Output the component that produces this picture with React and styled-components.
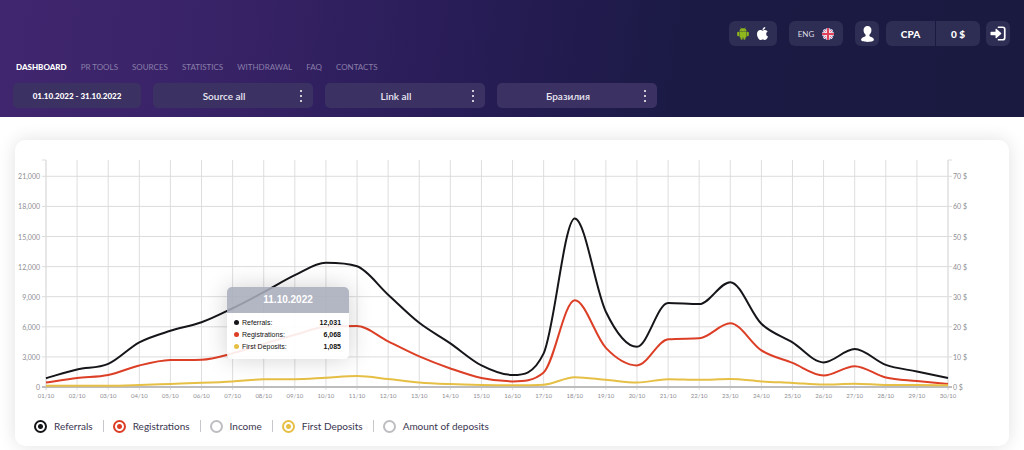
import React, { useState } from "react";
import styled, { createGlobalStyle } from "styled-components";
import { FaApple } from "react-icons/fa";

const GlobalStyle = createGlobalStyle`
  *, *::before, *::after { box-sizing: border-box; }
  body {
    margin: 0;
    background: #fff;
    font-family: "Lato", "Open Sans", sans-serif;
    color: #3a3650;
  }
  button, select, input { font-family: inherit; margin: 0; }
`;

const Header = styled.header`
  display: flex;
  flex-direction: column;
  padding: 21px 14px 9px 13px;
  background: linear-gradient(98deg, #40266e 0%, #392368 20%, #2a1d59 42%, #1b1a45 66%, #1a1a40 100%);
`;

const AccountBar = styled.div`
  display: flex;
  justify-content: flex-end;
  height: 25px;
`;

const pill = `
  display: flex;
  align-items: center;
  justify-content: center;
  border: 0;
  padding: 0;
  background: #2e2d53;
  color: #fff;
  text-decoration: none;
`;

const Apps = styled.div`
  ${pill}
  gap: 6px;
  width: 48px;
  margin-right: 12px;
  border-radius: 6px;
  a { display: flex; color: inherit; }
`;

const Language = styled.button`
  ${pill}
  gap: 8px;
  width: 54px;
  margin-right: 12px;
  border-radius: 6px;
  font-size: 8px;
  color: #dcdbe6;
`;

const IconButton = styled.button`
  ${pill}
  width: 24px;
  border-radius: 6px;
`;

const Balance = styled.div`
  display: flex;
  gap: 1px;
  margin: 0 6px 0 7px;
  border-radius: 6px;
  overflow: hidden;
`;

const BalanceCell = styled.span`
  ${pill}
  width: ${(p) => (p.$wide ? 49 : 44)}px;
  font-size: 10px;
  font-weight: 900;
`;

const Nav = styled.nav`
  display: flex;
  gap: 14px;
  margin: 15px 0 10px 3px;
`;

const NavLink = styled.a`
  font-size: 8px;
  line-height: 12px;
  text-decoration: none;
  color: ${(p) => (p.$active ? "#fff" : "#8a7ea9")};
  font-weight: ${(p) => (p.$active ? 900 : 400)};
`;

const Filters = styled.div`
  display: flex;
  gap: 12px;
`;

const DateRange = styled.button`
  ${pill}
  height: 25px;
  width: 128px;
  border-radius: 5px;
  background: #3b3162;
  font-size: 8px;
  font-weight: 900;
`;

const SelectWrap = styled.label`
  position: relative;
  display: flex;
  flex: 0 1 160px;
  svg {
    position: absolute;
    right: 10px;
    top: 6px;
    pointer-events: none;
  }
`;

const Select = styled.select`
  appearance: none;
  width: 100%;
  height: 25px;
  padding: 0 18px 0 0;
  border: 0;
  border-radius: 5px;
  background: #3b3162;
  color: #e9e7f2;
  font-size: 10px;
  font-weight: 600;
  text-align: center;
  text-align-last: center;
`;

const Card = styled.main`
  margin: 23px 15px 4px;
  padding-bottom: 12px;
  border-radius: 10px;
  background: #fff;
  box-shadow: 0 0 18px rgba(0, 0, 0, 0.12);
`;

const ChartArea = styled.div`
  position: relative;
`;

const Chart = styled.svg`
  display: block;
  width: 100%;
  height: auto;
`;

const AxisLabel = styled.text`
  font-size: ${(p) => (p.$small ? 6 : 7)}px;
  fill: #8e8e93;
`;

const Tooltip = styled.div`
  position: absolute;
  width: 122px;
  transform: translate(calc(-100% - 8px), -50%);
  border-radius: 5px;
  overflow: hidden;
  box-shadow: 0 0 24px rgba(0, 0, 0, 0.18);
  font-family: "Liberation Sans", sans-serif;
`;

const TooltipTitle = styled.div`
  background: rgba(168, 172, 187, 0.88);
  color: #fff;
  text-align: center;
  font-size: 10px;
  font-weight: 700;
  line-height: 26px;
`;

const TooltipBody = styled.div`
  padding: 4px 8px 6px 7px;
  background: rgba(255, 255, 255, 0.9);
`;

const TooltipRow = styled.div`
  display: flex;
  align-items: center;
  font-size: 7px;
  line-height: 12px;
  color: #111;
  &::before {
    content: "";
    width: 5px;
    height: 5px;
    margin-right: 3px;
    border-radius: 50%;
    background: ${(p) => p.$color};
  }
  strong { margin-left: auto; }
`;

const Legend = styled.div`
  display: flex;
  align-items: center;
  margin: 12px 0 0 19px;
`;

const LegendItem = styled.label`
  display: flex;
  align-items: center;
  gap: 7px;
  height: 16px;
  font-size: 10px;
  line-height: 16px;
  color: #3a3650;
  & + &::before {
    content: "";
    width: 1px;
    height: 12px;
    margin: 0 2px 0 10px;
    background: #c8c8cc;
  }
`;

const Toggle = styled.input`
  appearance: none;
  width: 13px;
  height: 13px;
  border: 2px solid #bdbdc2;
  border-radius: 50%;
  &:checked {
    border-color: ${(p) => p.$color};
    background: radial-gradient(circle, ${(p) => p.$color} 2px, transparent 3px);
  }
`;

const Android = () => (
  <svg width="12" height="13" viewBox="0 0 24 26" fill="#8fb81c" aria-hidden="true">
    <path d="M5 8.8a7 6.500 0 0 1 14 0z" />
    <path d="M7 1l2.400 3M17 1l-2.400 3" stroke="#8fb81c" strokeWidth="1.200" />
    <path d="M5 9.500h14V19a1.800 1.800 0 0 1-1.800 1.800H6.800A1.800 1.800 0 0 1 5 19z" />
    <rect x="0.400" y="9.400" width="3.900" height="9" rx="1.900" />
    <rect x="19.700" y="9.400" width="3.900" height="9" rx="1.900" />
    <rect x="7.200" y="17" width="4" height="8.600" rx="1.900" />
    <rect x="12.800" y="17" width="4" height="8.600" rx="1.900" />
    <circle cx="9" cy="6" r="0.700" fill="#2e2d53" />
    <circle cx="15" cy="6" r="0.700" fill="#2e2d53" />
  </svg>
);

const Flag = () => (
  <svg width="12" height="12" viewBox="0 0 24 24" aria-hidden="true">
    <clipPath id="flag"><circle cx="12" cy="12" r="12" /></clipPath>
    <g clipPath="url(#flag)">
      <rect width="24" height="24" fill="#5567a8" />
      <path d="M2 2l20 20M22 2L2 22" stroke="#f0e9f0" strokeWidth="5" />
      <path d="M2 2l20 20M22 2L2 22" stroke="#e0607a" strokeWidth="1.800" />
      <path d="M12 0v24M0 12h24" stroke="#f4e6ea" strokeWidth="7" />
      <path d="M12 0v24M0 12h24" stroke="#e0405a" strokeWidth="4" />
    </g>
  </svg>
);

const Person = () => (
  <svg width="13" height="16" viewBox="0 0 24 30" fill="#fff" aria-hidden="true">
    <path d="M12 0c4.600 0 7.400 3.200 7.400 7.600 0 3.600-1.500 7-3.800 8.900-.5 2 .2 3 2.200 3.800C21.500 21.700 24 23.400 24 26c0 2.800-5.500 4-12 4S0 28.800 0 26c0-2.600 2.500-4.300 6.200-5.700 2-.8 2.700-1.800 2.200-3.800C6.100 14.600 4.600 11.200 4.600 7.600 4.600 3.200 7.400 0 12 0z" />
  </svg>
);

const LogIn = () => (
  <svg width="16" height="15" viewBox="0 0 32 30" fill="none" aria-hidden="true">
    <path d="M17 2.500h8.500a4 4 0 0 1 4 4v17a4 4 0 0 1-4 4H17" stroke="#fff" strokeWidth="3.400" strokeLinecap="round" />
    <path d="M2.500 11.500h8.500V6.800c0-1.300 1.200-1.800 2.200-.9l9 8.100c.6.500.6 1.500 0 2l-9 8.100c-1 .9-2.200.4-2.200-.9v-4.600H2.500C1.500 18.600 1 18 1 17v-4c0-1 .5-1.500 1.500-1.500z" fill="#fff" />
  </svg>
);

const Dots = () => (
  <svg width="4" height="14" viewBox="0 0 4 14" fill="#fff" aria-hidden="true">
    <circle cx="2" cy="2" r="1" />
    <circle cx="2" cy="7" r="1" />
    <circle cx="2" cy="12" r="1" />
  </svg>
);

const W = 994;
const H = 266;
const LEFT = 31;
const RIGHT = 933;
const TOP = 20;
const BASE = 247;
const ROW = 30.1;
const MAX = 3000;

const xAt = (i) => LEFT + ((RIGHT - LEFT) * i) / 29;
const yAt = (v) => BASE - (v / MAX) * ROW;

const SERIES = {
  referrals: [880, 1750, 2300, 4450, 5600, 6450, 7850, 9450, 11150, 12380, 12031, 9200, 6400, 4350, 2150, 1200, 3350, 16800, 7500, 4000, 8380, 8260, 10450, 6300, 4450, 2450, 3780, 2200, 1550, 900],
  registrations: [450, 900, 1200, 2150, 2680, 2720, 3350, 4300, 5200, 6000, 6068, 4550, 3050, 1850, 900, 560, 1450, 8650, 3900, 2150, 4750, 4850, 6350, 3650, 2400, 1150, 2080, 950, 600, 300],
  deposits: [130, 130, 130, 200, 310, 420, 560, 760, 770, 920, 1085, 800, 450, 290, 210, 180, 230, 980, 720, 440, 780, 720, 790, 560, 410, 240, 330, 200, 200, 170],
};

// Monotone cubic interpolation, so that a curve never overshoots its points.
function curve(values) {
  const ys = values.map(yAt);
  const n = ys.length;
  const h = xAt(1) - xAt(0);
  const d = ys.slice(1).map((y, i) => (y - ys[i]) / h);
  const m = ys.map((_, i) => {
    if (i === 0) return d[0];
    if (i === n - 1) return d[n - 2];
    return d[i - 1] * d[i] <= 0 ? 0 : (d[i - 1] + d[i]) / 2;
  });
  d.forEach((slope, i) => {
    if (slope === 0) {
      m[i] = 0;
      m[i + 1] = 0;
      return;
    }
    const a = m[i] / slope;
    const b = m[i + 1] / slope;
    const s = a * a + b * b;
    if (s > 9) {
      const t = 3 / Math.sqrt(s);
      m[i] = t * a * slope;
      m[i + 1] = t * b * slope;
    }
  });
  let path = `M${xAt(0)},${ys[0]}`;
  for (let i = 0; i < n - 1; i++) {
    path += `C${xAt(i) + h / 3},${ys[i] + (m[i] * h) / 3} ${xAt(i + 1) - h / 3},${ys[i + 1] - (m[i + 1] * h) / 3} ${xAt(i + 1)},${ys[i + 1]}`;
  }
  return path;
}

const METRICS = [
  { key: "referrals", label: "Referrals", color: "#16151a" },
  { key: "registrations", label: "Registrations", color: "#dc3f26" },
  { key: "income", label: "Income", color: "#6b9bd8" },
  { key: "deposits", label: "First Deposits", color: "#e6bf45" },
  { key: "amount", label: "Amount of deposits", color: "#5fae6b" },
];

const NAV = ["DASHBOARD", "PR TOOLS", "SOURCES", "STATISTICS", "WITHDRAWAL", "FAQ", "CONTACTS"];
const FILTERS = [
  ["Source", "Source all"],
  ["Link", "Link all"],
  ["Country", "Бразилия"],
];
const ACTIVE_DAY = 10;

export default function App() {
  const [shown, setShown] = useState({ referrals: true, registrations: true, deposits: true });
  const drawn = METRICS.filter((m) => shown[m.key] && SERIES[m.key]);
  const middle =
    drawn.reduce((sum, m) => sum + yAt(SERIES[m.key][ACTIVE_DAY]), 0) / (drawn.length || 1);

  return (
    <>
      <GlobalStyle />
      <Header>
        <AccountBar>
          <Apps>
            <a href="#android" aria-label="Android app"><Android /></a>
            <a href="#ios" aria-label="iOS app"><FaApple size={15} /></a>
          </Apps>
          <Language type="button">ENG <Flag /></Language>
          <IconButton type="button" aria-label="Profile"><Person /></IconButton>
          <Balance>
            <BalanceCell $wide>CPA</BalanceCell>
            <BalanceCell>0 $</BalanceCell>
          </Balance>
          <IconButton type="button" aria-label="Log out"><LogIn /></IconButton>
        </AccountBar>
        <Nav>
          {NAV.map((item, i) => (
            <NavLink key={item} href={`#${item.toLowerCase()}`} $active={i === 0}>{item}</NavLink>
          ))}
        </Nav>
        <Filters>
          <DateRange type="button">01.10.2022 - 31.10.2022</DateRange>
          {FILTERS.map(([name, value]) => (
            <SelectWrap key={name}>
              <Select aria-label={name} defaultValue={value}>
                <option>{value}</option>
              </Select>
              <Dots />
            </SelectWrap>
          ))}
        </Filters>
      </Header>

      <Card>
        <ChartArea>
          <Chart viewBox={`0 0 ${W} ${H}`} role="img" aria-label="Daily statistics">
            {Array.from({ length: 30 }, (_, i) => (
              <g key={i}>
                <line x1={xAt(i)} x2={xAt(i)} y1={TOP} y2={BASE + 3} stroke={i === 0 || i === 29 ? "#cfcfd1" : "#dededf"} />
                <AxisLabel $small x={xAt(i)} y={BASE + 11} textAnchor="middle">{`${String(i + 1).padStart(2, "0")}/10`}</AxisLabel>
              </g>
            ))}
            {Array.from({ length: 8 }, (_, i) => (
              <g key={i}>
                <line x1={LEFT - 4} x2={RIGHT + 4} y1={yAt(i * MAX)} y2={yAt(i * MAX)} stroke={i === 0 ? "#bdbdc0" : "#dcdcdd"} strokeWidth={i === 0 ? 2 : 1} />
                <AxisLabel x={LEFT - 6} y={yAt(i * MAX) + 3} textAnchor="end">{(i * MAX).toLocaleString("en-US")}</AxisLabel>
                <AxisLabel x={RIGHT + 5} y={yAt(i * MAX) + 3}>{`${i * 10} $`}</AxisLabel>
              </g>
            ))}
            <path d={`M${LEFT - 4},${TOP}H${LEFT}M${RIGHT},${TOP}H${RIGHT + 4}`} stroke="#dcdcdd" />
            {drawn.map((m) => (
              <path key={m.key} d={curve(SERIES[m.key])} fill="none" stroke={m.color} strokeWidth="2" />
            ))}
          </Chart>
          {drawn.length > 0 && (
            <Tooltip style={{ left: `${(xAt(ACTIVE_DAY) / W) * 100}%`, top: `${(middle / H) * 100}%` }}>
              <TooltipTitle>11.10.2022</TooltipTitle>
              <TooltipBody>
                {drawn.map((m) => (
                  <TooltipRow key={m.key} $color={m.color}>
                    {m.label}: <strong>{SERIES[m.key][ACTIVE_DAY].toLocaleString("en-US")}</strong>
                  </TooltipRow>
                ))}
              </TooltipBody>
            </Tooltip>
          )}
        </ChartArea>
        <Legend>
          {METRICS.map((m) => (
            <LegendItem key={m.key}>
              <Toggle
                type="checkbox"
                $color={m.color}
                checked={Boolean(shown[m.key])}
                onChange={(e) => setShown({ ...shown, [m.key]: e.target.checked })}
              />
              {m.label}
            </LegendItem>
          ))}
        </Legend>
      </Card>
    </>
  );
}
